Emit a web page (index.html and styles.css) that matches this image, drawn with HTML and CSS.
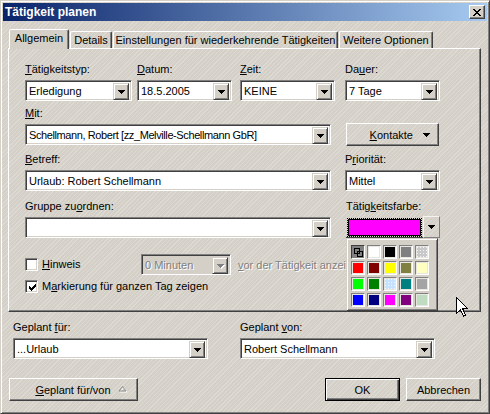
FILE: index.html
```html
<!DOCTYPE html>
<html lang="de">
<head>
<meta charset="utf-8">
<title>Tätigkeit planen</title>
<link rel="stylesheet" href="styles.css">
</head>
<body>
<div class="window">
  <div class="titlebar">
    <span class="title">Tätigkeit planen</span>
    <span class="close"><svg width="8" height="7" viewBox="0 0 8 7" shape-rendering="crispEdges"><path d="M0 0h2v1h-2zM6 0h2v1h-2zM1 1h2v1h-2zM5 1h2v1h-2zM2 2h4v1h-4zM3 3h2v1h-2zM2 4h4v1h-4zM1 5h2v1h-2zM5 5h2v1h-2zM0 6h2v1h-2zM6 6h2v1h-2z"/></svg></span>
  </div>
  <div class="body">
    <div class="tabs">
      <div class="tab active t1">Allgemein</div>
      <div class="tab t2">Details</div>
      <div class="tab t3">Einstellungen für wiederkehrende Tätigkeiten</div>
      <div class="tab t4">Weitere Optionen</div>
    </div>
    <div class="panel">
      <div class="row r1">
        <div class="field">
          <label><u>T</u>ätigkeitstyp:</label>
          <div class="combo w107"><span class="val">Erledigung</span><span class="drop"><svg class="tri" width="7" height="4" viewBox="0 0 7 4" shape-rendering="crispEdges"><path d="M0 0h7v1h-1v1h-1v1h-1v1h-1v-1h-1v-1h-1v-1h-1z"/></svg></span></div>
        </div>
        <div class="field">
          <label><u>D</u>atum:</label>
          <div class="combo w95"><span class="val">18.5.2005</span><span class="drop"><svg class="tri" width="7" height="4" viewBox="0 0 7 4" shape-rendering="crispEdges"><path d="M0 0h7v1h-1v1h-1v1h-1v1h-1v-1h-1v-1h-1v-1h-1z"/></svg></span></div>
        </div>
        <div class="field">
          <label><u>Z</u>eit:</label>
          <div class="combo w95"><span class="val">KEINE</span><span class="drop"><svg class="tri" width="7" height="4" viewBox="0 0 7 4" shape-rendering="crispEdges"><path d="M0 0h7v1h-1v1h-1v1h-1v1h-1v-1h-1v-1h-1v-1h-1z"/></svg></span></div>
        </div>
        <div class="field">
          <label>Da<u>u</u>er:</label>
          <div class="combo w95"><span class="val">7 Tage</span><span class="drop"><svg class="tri" width="7" height="4" viewBox="0 0 7 4" shape-rendering="crispEdges"><path d="M0 0h7v1h-1v1h-1v1h-1v1h-1v-1h-1v-1h-1v-1h-1z"/></svg></span></div>
        </div>
      </div>

      <div class="row r2">
        <div class="field span3">
          <label><u>M</u>it:</label>
          <div class="combo w306"><span class="val tight">Schellmann, Robert [zz_Melville-Schellmann GbR]</span><span class="drop"><svg class="tri" width="7" height="4" viewBox="0 0 7 4" shape-rendering="crispEdges"><path d="M0 0h7v1h-1v1h-1v1h-1v1h-1v-1h-1v-1h-1v-1h-1z"/></svg></span></div>
        </div>
        <button class="btn kontakte" type="button"><span><u>K</u>ontakte</span><svg width="7" height="4" viewBox="0 0 7 4" shape-rendering="crispEdges"><path d="M0 0h7v1h-1v1h-1v1h-1v1h-1v-1h-1v-1h-1v-1h-1z"/></svg></button>
      </div>

      <div class="row r3">
        <div class="field span3">
          <label><u>B</u>etreff:</label>
          <div class="combo w306"><span class="val">Urlaub: Robert Schellmann</span><span class="drop"><svg class="tri" width="7" height="4" viewBox="0 0 7 4" shape-rendering="crispEdges"><path d="M0 0h7v1h-1v1h-1v1h-1v1h-1v-1h-1v-1h-1v-1h-1z"/></svg></span></div>
        </div>
        <div class="field">
          <label>P<u>r</u>iorität:</label>
          <div class="combo w95"><span class="val">Mittel</span><span class="drop"><svg class="tri" width="7" height="4" viewBox="0 0 7 4" shape-rendering="crispEdges"><path d="M0 0h7v1h-1v1h-1v1h-1v1h-1v-1h-1v-1h-1v-1h-1z"/></svg></span></div>
        </div>
      </div>

      <div class="row r4">
        <div class="field span3">
          <label>Gruppe zu<u>o</u>rdnen:</label>
          <div class="combo w306"><span class="val"></span><span class="drop"><svg class="tri" width="7" height="4" viewBox="0 0 7 4" shape-rendering="crispEdges"><path d="M0 0h7v1h-1v1h-1v1h-1v1h-1v-1h-1v-1h-1v-1h-1z"/></svg></span></div>
        </div>
        <div class="field farbe">
          <label>Tätig<u>k</u>eitsfarbe:</label>
          <div class="swatch-row">
            <div class="swatch"><div class="swatch-in"><div class="swatch-fill"></div></div></div>
            <div class="swatch-btn"><svg width="7" height="4" viewBox="0 0 7 4" shape-rendering="crispEdges"><path d="M0 0h7v1h-1v1h-1v1h-1v1h-1v-1h-1v-1h-1v-1h-1z"/></svg></div>
          </div>
          <div class="popup">
            <div class="cells">
              <span class="cell c-auto"><svg width="9" height="9" viewBox="0 0 9 9" shape-rendering="crispEdges" fill="none" stroke="#000"><rect x="0.5" y="0.5" width="5" height="5"/><rect x="3.5" y="3.5" width="5" height="5"/></svg></span>
              <span class="cell" style="--c:#ffffff"></span>
              <span class="cell" style="--c:#000000"></span>
              <span class="cell" style="--c:#808080"></span>
              <span class="cell dots" style="--c:#c8c8c8"></span>
              <span class="cell" style="--c:#ff0000"></span>
              <span class="cell" style="--c:#800000"></span>
              <span class="cell" style="--c:#ffff00"></span>
              <span class="cell" style="--c:#808040"></span>
              <span class="cell" style="--c:#ffffc0"></span>
              <span class="cell" style="--c:#00ff00"></span>
              <span class="cell" style="--c:#008000"></span>
              <span class="cell dots" style="--c:#c4e2ff"></span>
              <span class="cell" style="--c:#008080"></span>
              <span class="cell" style="--c:#a4a4a4"></span>
              <span class="cell" style="--c:#0000ff"></span>
              <span class="cell" style="--c:#000080"></span>
              <span class="cell" style="--c:#ff00ff"></span>
              <span class="cell" style="--c:#800080"></span>
              <span class="cell" style="--c:#c0dcc0"></span>
            </div>
          </div>
        </div>
      </div>

      <div class="chkrow hinweis">
        <span class="check"></span>
        <span class="chk-label lbl-hinweis"><u>H</u>inweis</span>
        <div class="combo w90 disabled"><span class="val">0 Minuten</span><span class="drop"><svg class="tri" width="7" height="4" viewBox="0 0 7 4" shape-rendering="crispEdges"><path d="M0 0h7v1h-1v1h-1v1h-1v1h-1v-1h-1v-1h-1v-1h-1z"/></svg></span></div>
        <span class="dis-text"><u>v</u>or der Tätigkeit anzeigen</span>
      </div>

      <div class="chkrow mark">
        <span class="check checked"><svg width="7" height="7" viewBox="0 0 7 7" shape-rendering="crispEdges"><path d="M6 0h1v1h-1zM5 1h2v1h-2zM0 2h1v1h-1zM4 2h3v1h-3zM0 3h2v1h-2zM3 3h3v1h-3zM0 4h5v1h-5zM1 5h3v1h-3zM2 6h1v1h-1z"/></svg></span>
        <span class="chk-label">M<u>a</u>rkierung für ganzen Tag zeigen</span>
      </div>
    </div>

    <div class="planned">
      <div class="field">
        <label>Geplant <u>f</u>ür:</label>
        <div class="combo w195"><span class="val">...Urlaub</span><span class="drop"><svg class="tri" width="7" height="4" viewBox="0 0 7 4" shape-rendering="crispEdges"><path d="M0 0h7v1h-1v1h-1v1h-1v1h-1v-1h-1v-1h-1v-1h-1z"/></svg></span></div>
      </div>
      <div class="field">
        <label>Geplant <u>v</u>on:</label>
        <div class="combo w195"><span class="val">Robert Schellmann</span><span class="drop"><svg class="tri" width="7" height="4" viewBox="0 0 7 4" shape-rendering="crispEdges"><path d="M0 0h7v1h-1v1h-1v1h-1v1h-1v-1h-1v-1h-1v-1h-1z"/></svg></span></div>
      </div>
    </div>

    <div class="buttons">
      <button class="btn geplant" type="button"><span><u>G</u>eplant für/von</span><svg width="10" height="7" viewBox="0 0 10 7"><path d="M5.5 1.5 L9 6 H2 Z" fill="none" stroke="#fff" stroke-width="1"/><path d="M4.5 0.5 L8 5 H1 Z" fill="none" stroke="#8a8a8a" stroke-width="1"/></svg></button>
      <button class="btn ok" type="button">OK</button>
      <button class="btn cancel" type="button">Abbrechen</button>
    </div>
  </div>
  <svg class="cursor" width="13" height="20" viewBox="0 0 13 20" shape-rendering="crispEdges"><path d="M0.5 0.5 V16.5 L4.5 12.5 L7.5 19 L9.5 18 L6.5 11.5 H11.5 Z" fill="#fff" stroke="#000" stroke-width="1" stroke-linejoin="miter"/></svg>
</div>
</body>
</html>
```

FILE: styles.css
```css
* { box-sizing: border-box; }
html, body { margin: 0; padding: 0; }
body {
  width: 490px;
  height: 414px;
  overflow: hidden;
  font: 11px "Liberation Sans", Arial, sans-serif;
  color: #000;
  background: #d4d0c8;
}
u { text-decoration: underline; text-underline-offset: 1px; }

.window {
  position: relative;
  width: 490px;
  height: 414px;
  border: 1px solid;
  border-color: #d4d0c8 #404040 #404040 #d4d0c8;
  box-shadow: inset 1px 1px #fff, inset -1px -1px #808080;
  padding: 2px;
  display: flex;
  flex-direction: column;
  background-color: #d4d0c8;
  background-image: repeating-linear-gradient(135deg, rgba(255,255,255,0.22) 0 1px, transparent 1px 3px);
}

.titlebar {
  height: 18px;
  display: flex;
  align-items: center;
  justify-content: space-between;
  background: linear-gradient(to right, #0a246a, #a6caf0);
  padding: 0 2px 0 2px;
}
.title { color: #fff; font-weight: bold; font-size: 12px; line-height: 18px; }
.close {
  width: 16px;
  height: 14px;
  display: flex;
  align-items: center;
  justify-content: center;
  background: #d4d0c8;
  border: 1px solid;
  border-color: #fff #404040 #404040 #fff;
  box-shadow: inset -1px -1px #808080;
}

.body {
  flex: 1;
  padding: 8px 6px 0 5px;
  display: flex;
  flex-direction: column;
}

/* Tabs */
.tabs { display: flex; align-items: flex-end; height: 19px; }
.tab {
  height: 17px;
  background: transparent;
  border: 1px solid;
  border-bottom: none;
  border-color: #fff #404040 transparent #fff;
  box-shadow: inset -1px 0 #808080;
  border-radius: 2px 2px 0 0;
  text-align: center;
  line-height: 16px;
  white-space: nowrap;
  margin-left: 1px;
}
.tab.active {
  height: 20px;
  margin-bottom: -1px;
  position: relative;
  z-index: 1;
  line-height: 17px;
  background: #d4d0c8;
}
.t1 { width: 60px; }
.t2 { width: 42px; margin-left: 1px; }
.t3 { width: 225px; }
.t4 { width: 94px; margin-left: 1px; }

.panel {
  height: 264px;
  border: 1px solid;
  border-color: #fff #404040 #404040 #fff;
  box-shadow: inset -1px -1px #808080;
  padding: 14px 0 0 16px;
}

.row { display: grid; grid-template-columns: 112px 103px 105px 95px; }
.r2 { margin-top: 6px; }
.r3 { margin-top: 8px; }
.r4 { margin-top: 9px; }
.span3 { grid-column: 1 / 4; }

.field label {
  display: block;
  height: 13px;
  line-height: 13px;
  margin-bottom: 4px;
  white-space: nowrap;
}

/* Combo box */
.combo {
  height: 21px;
  display: flex;
  background: #fff;
  border: 1px solid;
  border-color: #808080 #fff #fff #808080;
  box-shadow: inset 1px 1px #404040, inset -1px -1px #d4d0c8;
  padding: 2px;
}
.combo .val {
  flex: 1;
  line-height: 17px;
  padding-left: 1px;
  white-space: nowrap;
  overflow: hidden;
}
.combo .val.tight { letter-spacing: -0.4px; }
.drop {
  width: 16px;
  height: 17px;
  flex: none;
  background: #d4d0c8;
  border: 1px solid;
  border-color: #d4d0c8 #404040 #404040 #d4d0c8;
  box-shadow: inset 1px 1px #fff, inset -1px -1px #808080;
  display: flex;
  align-items: center;
  justify-content: center;
}
.w107 { width: 107px; }
.w95 { width: 95px; }
.w90 { width: 90px; }
.w306 { width: 306px; }
.w195 { width: 195px; }

.combo.disabled { background: #d4d0c8; }
.combo.disabled .val { color: #808080; text-shadow: 1px 1px #fff; }
.combo.disabled .tri { fill: #808080; filter: drop-shadow(1px 1px 0 #fff); }

/* Buttons */
.btn {
  font: inherit;
  color: #000;
  background: transparent;
  border: 1px solid;
  border-color: #fff #404040 #404040 #fff;
  box-shadow: inset -1px -1px #808080;
  height: 23px;
  padding: 0;
  display: flex;
  align-items: center;
  justify-content: center;
}
.kontakte {
  grid-column: 4;
  width: 93px;
  margin-left: 1px;
  align-self: end;
  margin-bottom: -1px;
  justify-content: flex-end;
  gap: 10px;
  padding-right: 8px;
}

/* Colour picker */
.farbe { position: relative; margin-left: 1px; }
.swatch-row { display: flex; height: 21px; }
.swatch {
  width: 79px;
  height: 21px;
  padding: 1px 1px 0 1px;
  border-bottom: 1px solid #404040;
}
.swatch-in { height: 100%; border: 1px dotted #000; padding: 0; }
.swatch-fill { height: 100%; background: #ff00ff; border: 1px solid #000; }
.swatch-btn {
  width: 17px;
  height: 22px;
  margin-top: -1px;
  border: 1px solid;
  border-color: #f4f3ef #808080 #808080 #f4f3ef;
  display: flex;
  align-items: center;
  justify-content: center;
}
.popup {
  position: absolute;
  left: 0;
  top: 38px;
  width: 92px;
  height: 73px;
  background: #d4d0c8;
  border: 1px solid;
  border-color: #d4d0c8 #404040 #404040 #d4d0c8;
  box-shadow: inset 1px 1px #fff, inset -1px -1px #808080;
  padding: 6px 0 0 4px;
  z-index: 2;
}
.cells {
  display: grid;
  grid-template-columns: repeat(5, 14px);
  grid-auto-rows: 14px;
  gap: 2px;
}
.cell {
  display: block;
  border: 1px solid;
  border-color: #808080 #fff #fff #808080;
  background: var(--c);
  box-shadow: inset 1px 1px #e8e6e0, inset -1px -1px #e8e6e0;
}
.cell.dots {
  background-color: var(--c);
  background-image: radial-gradient(circle, rgba(255,255,255,0.8) 0.5px, transparent 0.9px);
  background-size: 3px 3px;
}
.cell.c-auto {
  background: #808080;
  border-color: #404040 #fff #fff #404040;
  box-shadow: none;
  display: flex;
  align-items: center;
  justify-content: center;
}

/* Checkbox rows */
.chkrow { display: flex; align-items: center; }
.hinweis { height: 21px; margin-top: 16px; }
.mark { height: 13px; margin-top: 5px; }
.check {
  width: 13px;
  height: 13px;
  flex: none;
  background: #fff;
  border: 1px solid;
  border-color: #808080 #fff #fff #808080;
  box-shadow: inset 1px 1px #404040, inset -1px -1px #d4d0c8;
  display: flex;
  align-items: center;
  justify-content: center;
  padding: 1px 0 0 1px;
}
.chk-label { margin-left: 4px; line-height: 13px; white-space: nowrap; }
.lbl-hinweis { width: 99px; }
.dis-text {
  margin-left: 7px;
  color: #808080;
  text-shadow: 1px 1px #fff;
  white-space: nowrap;
}

/* Bottom section */
.planned {
  display: grid;
  grid-template-columns: 227px 195px;
  margin: 9px 0 0 5px;
}
.buttons { display: flex; margin-top: 19px; padding-left: 1px; }
.geplant { width: 129px; gap: 7px; padding-left: 16px; }
.ok {
  width: 75px;
  margin-left: auto;
  border-color: #000;
  box-shadow: inset 1px 1px #fff, inset -1px -1px #404040, inset -2px -2px #808080;
}
.cancel { width: 75px; margin-left: 6px; }

.cursor { position: absolute; left: 455px; top: 296px; z-index: 5; }
```
